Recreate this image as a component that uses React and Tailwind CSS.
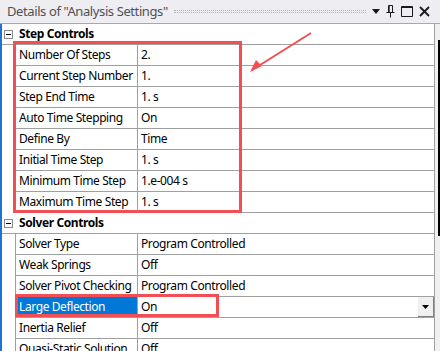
import React from 'react';

const stepRows = [
  ['Number Of Steps', '2.'],
  ['Current Step Number', '1.'],
  ['Step End Time', '1. s'],
  ['Auto Time Stepping', 'On'],
  ['Define By', 'Time'],
  ['Initial Time Step', '1. s'],
  ['Minimum Time Step', '1.e-004 s'],
  ['Maximum Time Step', '1. s'],
];

const solverRows = [
  ['Solver Type', 'Program Controlled'],
  ['Weak Springs', 'Off'],
  ['Solver Pivot Checking', 'Program Controlled'],
  ['Large Deflection', 'On', true],
  ['Inertia Relief', 'Off'],
  ['Quasi-Static Solution', 'Off'],
];

function GroupHeader({ title }) {
  return (
    <div className="flex h-[21px] border-b border-[#a0a0a0]">
      <div className="w-[13px] flex items-center justify-center">
        <div className="w-[9px] h-[9px] border border-[#8a8a8a] bg-white flex items-center justify-center">
          <div className="w-[5px] h-px bg-black" />
        </div>
      </div>
      <div className="flex-1 flex items-center pl-[4px] font-bold text-black whitespace-nowrap">{title}</div>
    </div>
  );
}

function Row({ label, value, selected }) {
  return (
    <div className="flex h-[21px]">
      <div className="w-[13px]" />
      <div className="flex-1 flex border-l border-b border-[#a0a0a0]">
        <div
          className={
            'w-[122px] flex items-center pl-[3px] border-r border-[#a0a0a0] whitespace-nowrap overflow-hidden ' +
            (selected ? 'bg-[#0078d7] text-white' : 'text-black')
          }
        >
          {label}
        </div>
        <div className="flex-1 flex items-center pl-[3px] text-black whitespace-nowrap">{value}</div>
        {selected && (
          <div className="w-[16px] h-[20px] bg-[#f0f0f0] border-r border-b border-[#808080] flex items-center justify-center">
            <svg width="7" height="4" viewBox="0 0 7 4">
              <path d="M0 0h7L3.5 4z" fill="#000" />
            </svg>
          </div>
        )}
      </div>
    </div>
  );
}

export default function App() {
  return (
    <div className="w-[440px] h-[351px] overflow-hidden relative bg-white text-[12px] tracking-[-0.4px] font-['Noto_Sans',sans-serif] leading-none">
      {/* Title bar */}
      <div className="h-[24px] bg-[#eeeef2] border-b border-[#a8a8a8] flex items-center pl-[7px] pr-[10px]">
        <span className="text-[13px] text-[#505050] whitespace-nowrap">Details of "Analysis Settings"</span>
        <div className="flex-1 mx-[6px] h-[3px] border-y border-dotted border-[#b4b4b4]" />
        <div className="flex items-center gap-[6px]">
          <svg width="8" height="5" viewBox="0 0 8 5">
            <path d="M0 0h8L4 5z" fill="#1a1a1a" />
          </svg>
          <svg width="9" height="13" viewBox="0 0 9 13">
            <path d="M2.5 0.5h4v7h-4zM0.5 7.5h8M4.5 7.5v5" stroke="#1a1a1a" fill="none" />
            <path d="M3.5 1v6" stroke="#1a6fd0" />
          </svg>
          <svg width="12" height="11" viewBox="0 0 12 11">
            <path d="M0.5 0.5h11v10h-11z" stroke="#1a1a1a" fill="none" />
            <path d="M0.5 1.5h11" stroke="#1a1a1a" />
          </svg>
          <svg width="11" height="11" viewBox="0 0 11 11">
            <path d="M1 1l9 9M10 1l-9 9" stroke="#1a1a1a" strokeWidth="1.8" />
          </svg>
        </div>
      </div>

      <div className="flex h-[327px]">
        <div className="w-[2px] bg-[#1e73d2]" />
        <div className="flex-1 border-r border-[#a0a0a0]">
          <GroupHeader title="Step Controls" />
          {stepRows.map(([l, v]) => (
            <Row key={l} label={l} value={v} />
          ))}
          <GroupHeader title="Solver Controls" />
          {solverRows.map(([l, v, s]) => (
            <Row key={l} label={l} value={v} selected={s} />
          ))}
        </div>
        <div className="w-[5px] bg-[#f0f0f0] flex justify-end">
          <div className="w-[2px] mt-[16px] h-[196px] bg-black" />
        </div>
      </div>

      {/* annotations */}
      <div className="absolute left-[13px] top-[41px] w-[229px] h-[172px] border-[3px] border-[#f24e54]" />
      <div className="absolute left-[15px] top-[294px] w-[204px] h-[23px] border-[3px] border-[#f24e54]" />
      <svg className="absolute left-0 top-0" width="440" height="351">
        <path d="M311 33L252 70" stroke="#f24e54" strokeWidth="2" />
        <path d="M250 72L256 60L262 66z" fill="#f24e54" />
      </svg>
    </div>
  );
}
